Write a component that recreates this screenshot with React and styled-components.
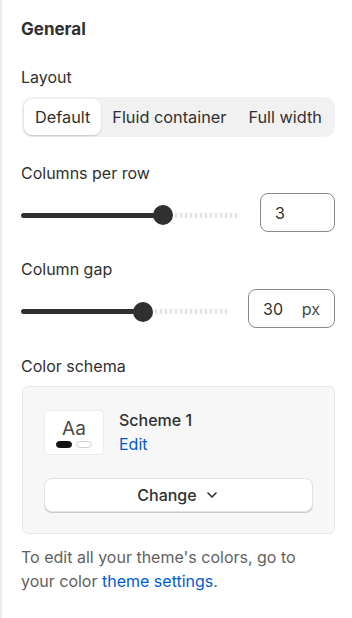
import React from "react";
import styled, { createGlobalStyle } from "styled-components";
import { ChevronDown } from "lucide-react";

const GlobalStyle = createGlobalStyle`
  body {
    margin: 0;
    background: #ffffff;
    font-family: Inter, "Noto Sans", sans-serif;
    color: #303030;
  }
`;

const Panel = styled.div`
  min-height: 618px;
  box-sizing: border-box;
  border-left: 2px solid #ebebeb;
  padding: 17px 17px 0 19px;
  display: flex;
  flex-direction: column;
`;

const Title = styled.h2`
  margin: 0;
  font-size: 17px;
  font-weight: 700;
  line-height: 24px;
  margin-bottom: 26px;
`;

const Field = styled.div`
  display: flex;
  flex-direction: column;
  gap: 10px;
  margin-bottom: ${p => p.spacing ?? 26}px;
`;

const Label = styled.div`
  font-size: 16px;
  line-height: 20px;
`;

const Segmented = styled.div`
  display: flex;
  background: #f1f1f1;
  border-radius: 10px;
  padding: 2px;
  height: 40px;
  box-sizing: border-box;
  margin-left: 1px;
  overflow: hidden;
`;

const Segment = styled.div`
  flex: none;
  white-space: nowrap;
  display: flex;
  align-items: center;
  padding: 0 11px;
  font-size: 16.3px;
  border-radius: 8px;
  background: ${p => (p.active ? "#ffffff" : "transparent")};
  box-shadow: ${p => (p.active ? "0 1px 2px rgba(0,0,0,0.18)" : "none")};
`;

const SliderRow = styled.div`
  display: flex;
  align-items: center;
  gap: 20px;
`;

const Slider = styled.div`
  flex: 1;
  display: flex;
  align-items: center;
  height: 39px;
  box-sizing: border-box;
  padding-top: ${p => p.drop}px;
`;

const Filled = styled.div`
  height: 5px;
  background: #303030;
  border-radius: 3px 0 0 3px;
  margin-right: -10px;
`;

const Thumb = styled.div`
  width: 20px;
  height: 20px;
  border-radius: 50%;
  background: #303030;
  flex: none;
  position: relative;
  z-index: 1;
`;

const Rest = styled.div`
  flex: 1;
  height: 5px;
  margin-left: 2px;
  border-radius: 0 3px 3px 0;
  background: repeating-linear-gradient(
    to right,
    #e3e3e3 0,
    #e3e3e3 2px,
    #fafafa 2px,
    #fafafa 5px
  );
`;

const NumberBox = styled.div`
  width: ${p => p.width}px;
  height: 39px;
  box-sizing: border-box;
  border: 1px solid #8a8a8a;
  border-radius: 8px;
  display: flex;
  align-items: center;
  justify-content: space-between;
  padding: 0 14px;
  font-size: 16px;
`;

const Unit = styled.span`
  color: #4a4a4a;
`;

const Card = styled.div`
  background: #f7f7f7;
  border: 1px solid #e8e8e8;
  border-radius: 6px;
  padding: 22px 21px 21px;
  display: flex;
  flex-direction: column;
  gap: 23px;
  margin-left: 1px;
`;

const SchemeRow = styled.div`
  display: flex;
  align-items: center;
  gap: 15px;
`;

const Swatch = styled.div`
  width: 60px;
  height: 45px;
  box-sizing: border-box;
  background: #ffffff;
  border: 1px solid #ebebeb;
  border-radius: 4px;
  display: flex;
  flex-direction: column;
  align-items: center;
  justify-content: center;
  gap: 2px;
  padding-top: 2px;
`;

const SwatchText = styled.div`
  font-size: 19px;
  line-height: 20px;
  color: #4a4a4a;
`;

const Pills = styled.div`
  display: flex;
  gap: 4px;
`;

const Pill = styled.div`
  width: 16px;
  height: 7px;
  border-radius: 4px;
  box-sizing: border-box;
  background: ${p => (p.dark ? "#111111" : "#ffffff")};
  border: 1px solid ${p => (p.dark ? "#111111" : "#cfcfcf")};
`;

const SchemeInfo = styled.div`
  display: flex;
  flex-direction: column;
  gap: 2px;
`;

const SchemeName = styled.div`
  font-size: 16px;
  font-weight: 500;
  line-height: 22px;
`;

const Link = styled.a`
  color: #005bd3;
  text-decoration: none;
  font-size: inherit;
`;

const EditLink = styled(Link)`
  font-size: 16px;
  line-height: 22px;
`;

const ChangeButton = styled.button`
  height: 34px;
  background: #ffffff;
  border: 1px solid #e3e3e3;
  border-radius: 8px;
  box-shadow: 0 1px 0 #c9c9c9;
  font-family: inherit;
  font-size: 16px;
  font-weight: 500;
  color: #303030;
  display: flex;
  align-items: center;
  justify-content: center;
  gap: 7px;
  padding: 0;
`;

const Help = styled.p`
  margin: 11px 0 0;
  padding-right: 20px;
  font-size: 16px;
  line-height: 24px;
  color: #616161;
`;

const RangeSlider = ({ percent, drop }) => (
  <Slider drop={drop}>
    <Filled style={{ width: `${percent}%` }} />
    <Thumb />
    <Rest />
  </Slider>
);

const App = () => (
  <>
    <GlobalStyle />
    <Panel>
      <Title>General</Title>

      <Field>
        <Label>Layout</Label>
        <Segmented>
          <Segment active>Default</Segment>
          <Segment>Fluid container</Segment>
          <Segment>Full width</Segment>
        </Segmented>
      </Field>

      <Field spacing={27}>
        <Label>Columns per row</Label>
        <SliderRow>
          <RangeSlider percent={65} drop={5} />
          <NumberBox width={75}>3</NumberBox>
        </SliderRow>
      </Field>

      <Field spacing={28}>
        <Label>Column gap</Label>
        <SliderRow>
          <RangeSlider percent={59} drop={6} />
          <NumberBox width={87}>
            30 <Unit>px</Unit>
          </NumberBox>
        </SliderRow>
      </Field>

      <Field spacing={0}>
        <Label>Color schema</Label>
        <Card>
          <SchemeRow>
            <Swatch>
              <SwatchText>Aa</SwatchText>
              <Pills>
                <Pill dark />
                <Pill />
              </Pills>
            </Swatch>
            <SchemeInfo>
              <SchemeName>Scheme 1</SchemeName>
              <EditLink href="#">Edit</EditLink>
            </SchemeInfo>
          </SchemeRow>
          <ChangeButton>
            Change <ChevronDown size={16} strokeWidth={2.5} />
          </ChangeButton>
        </Card>
      </Field>

      <Help>
        To edit all your theme's colors, go to your color{" "}
        <Link href="#">theme settings</Link>.
      </Help>
    </Panel>
  </>
);

export default App;
